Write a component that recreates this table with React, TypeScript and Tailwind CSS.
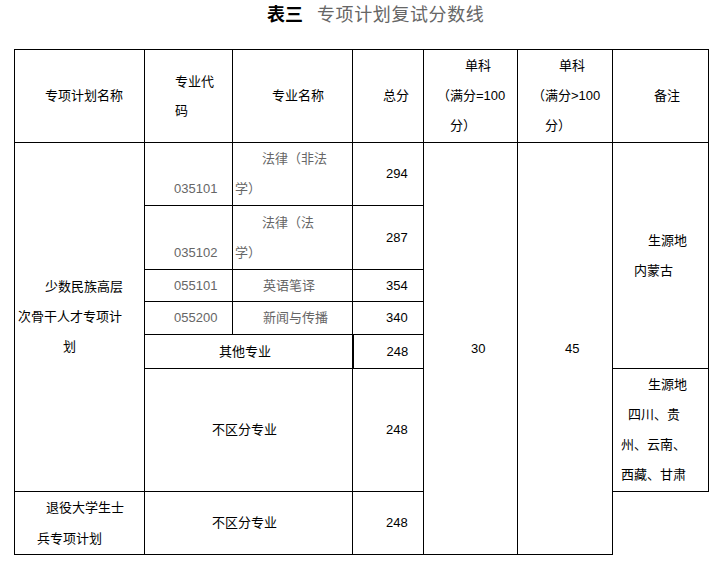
import React from 'react';

const cell = 'border border-black p-0 align-middle text-left';
const gray = 'text-[#666]';

// one line of text inside a cell, with its own left offset
const Line: React.FC<{ pl: string; children?: React.ReactNode; className?: string }> = ({ pl, children, className }) => (
  <div className={`${pl} whitespace-nowrap ${className || ''}`}>{children}</div>
);

const App: React.FC = () => {
  return (
    <div className="w-[722px] h-[568px] bg-white text-black font-['Liberation_Sans','Noto_Sans_CJK_SC',sans-serif] text-[13px]">
      {/* Title */}
      <div className="pt-[4px] pl-[267px] h-[49px] text-[18px] leading-[22px] whitespace-nowrap">
        <span className="font-bold">表三</span>
        <span className="ml-[14px] text-[#666] tracking-[0.6px]">专项计划复试分数线</span>
      </div>

      <table className="ml-[14px] table-fixed border-collapse w-[694px] leading-[30px]">
        <colgroup>
          <col className="w-[130px]" />
          <col className="w-[88px]" />
          <col className="w-[120px]" />
          <col className="w-[71px]" />
          <col className="w-[94px]" />
          <col className="w-[95px]" />
          <col className="w-[96px]" />
        </colgroup>
        <tbody>
          {/* Header */}
          <tr className="h-[93px]">
            <td className={cell}><Line pl="pl-[30px]">专项计划名称</Line></td>
            <td className={`${cell} leading-[29px]`}>
              <Line pl="pl-[30px]">专业代</Line>
              <Line pl="pl-[30px]">码</Line>
            </td>
            <td className={cell}><Line pl="pl-[39px]">专业名称</Line></td>
            <td className={cell}><Line pl="pl-[30px]">总分</Line></td>
            <td className={cell}>
              <Line pl="pl-[41px]">单科</Line>
              <Line pl="pl-[13px]">（满分=100</Line>
              <Line pl="pl-[26px]">分）</Line>
            </td>
            <td className={cell}>
              <Line pl="pl-[41px]">单科</Line>
              <Line pl="pl-[14px]">（满分&gt;100</Line>
              <Line pl="pl-[27px]">分）</Line>
            </td>
            <td className={cell}><Line pl="pl-[41px]">备注</Line></td>
          </tr>

          {/* 035101 */}
          <tr className="h-[63px]">
            <td className={cell} rowSpan={6}>
              <Line pl="pl-[30px]">少数民族高层</Line>
              <Line pl="pl-[3px]">次骨干人才专项计</Line>
              <Line pl="pl-[48px]">划</Line>
            </td>
            <td className={cell}>
              <Line pl="pl-[29px]" className={gray}>&nbsp;</Line>
              <Line pl="pl-[29px]" className={gray}>035101</Line>
            </td>
            <td className={`${cell} ${gray}`}>
              <Line pl="pl-[29px]">法律（非法</Line>
              <Line pl="pl-[2px]">学）</Line>
            </td>
            <td className={cell}><Line pl="pl-[33px]">294</Line></td>
            <td className={cell} rowSpan={7}><Line pl="pl-[47px]">30</Line></td>
            <td className={cell} rowSpan={7}><Line pl="pl-[47px]">45</Line></td>
            <td className={cell} rowSpan={5}>
              <Line pl="pl-[35px]">生源地</Line>
              <Line pl="pl-[21px]">内蒙古</Line>
            </td>
          </tr>

          {/* 035102 */}
          <tr className="h-[64px]">
            <td className={cell}>
              <Line pl="pl-[29px]" className={gray}>&nbsp;</Line>
              <Line pl="pl-[29px]" className={gray}>035102</Line>
            </td>
            <td className={`${cell} ${gray}`}>
              <Line pl="pl-[29px]">法律（法</Line>
              <Line pl="pl-[2px]">学）</Line>
            </td>
            <td className={cell}><Line pl="pl-[33px]">287</Line></td>
          </tr>

          {/* 055101 */}
          <tr className="h-[32px]">
            <td className={`${cell} ${gray}`}><Line pl="pl-[29px]">055101</Line></td>
            <td className={`${cell} ${gray}`}><Line pl="pl-[30px]">英语笔译</Line></td>
            <td className={cell}><Line pl="pl-[33px]">354</Line></td>
          </tr>

          {/* 055200 */}
          <tr className="h-[33px]">
            <td className={`${cell} ${gray}`}><Line pl="pl-[29px]">055200</Line></td>
            <td className={`${cell} ${gray}`}><Line pl="pl-[30px]">新闻与传播</Line></td>
            <td className={cell}><Line pl="pl-[33px]">340</Line></td>
          </tr>

          {/* 其他专业 */}
          <tr className="h-[34px]">
            <td className={`${cell} border-r-2`} colSpan={2}><Line pl="pl-[74px]">其他专业</Line></td>
            <td className={cell}><Line pl="pl-[33px]">248</Line></td>
          </tr>

          {/* 不区分专业 */}
          <tr className="h-[123px]">
            <td className={cell} colSpan={2}><Line pl="pl-[67px]">不区分专业</Line></td>
            <td className={cell}><Line pl="pl-[33px]">248</Line></td>
            <td className={cell}>
              <Line pl="pl-[35px]">生源地</Line>
              <Line pl="pl-[15px]">四川、贵</Line>
              <Line pl="pl-[8px]">州、云南、</Line>
              <Line pl="pl-[8px]">西藏、甘肃</Line>
            </td>
          </tr>

          {/* 退役大学生士兵 */}
          <tr className="h-[63px]">
            <td className={`${cell} leading-[31px]`}>
              <Line pl="pl-[31px]">退役大学生士</Line>
              <Line pl="pl-[22px]">兵专项计划</Line>
            </td>
            <td className={cell} colSpan={2}><Line pl="pl-[67px]">不区分专业</Line></td>
            <td className={cell}><Line pl="pl-[33px]">248</Line></td>
            <td className="p-0 border-0" />
          </tr>
        </tbody>
      </table>
    </div>
  );
};

export default App;
